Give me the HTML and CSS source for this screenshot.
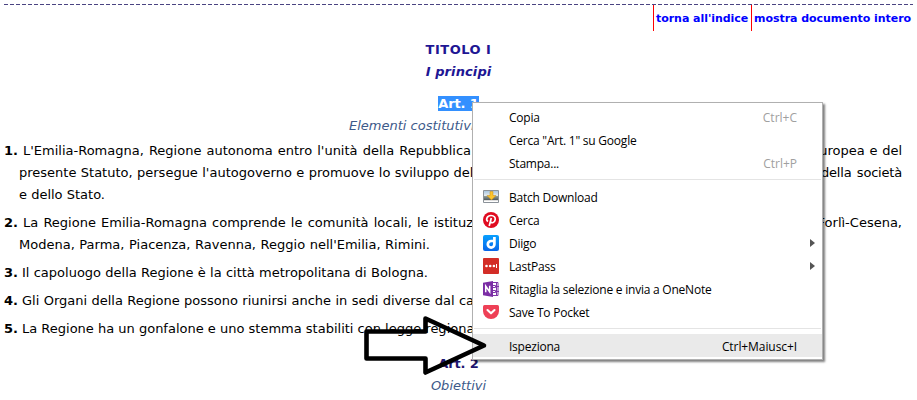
FILE: index.html
```html
<!DOCTYPE html>
<html lang="it">
<head>
<meta charset="utf-8">
<title>Statuto della Regione Emilia-Romagna</title>
<link rel="stylesheet" href="styles.css">
</head>
<body>
<svg class="rule" width="909" height="1"><path d="M0 .5H909" stroke="#4a4482" stroke-dasharray="4 2"/></svg>
<nav class="tools"><a class="t1"><span>torna all'indice</span></a><a class="t2"><span>mostra documento intero</span></a></nav>
<main>
<h1 class="title wide">TITOLO I</h1>
<h2 class="title sub">I principi</h2>
<h3 class="title art"><mark>Art. 1</mark></h3>
<p class="caption first">Elementi costitutivi</p>
<div class="par">
<div class="line"><b>1.</b><span class="seg w448">L'Emilia-Romagna, Regione autonoma entro l'unità della Repubblica</span><span class="seg end w91">Europea e del</span></div>
<div class="line in"><span class="seg w466">presente Statuto, persegue l'autogoverno e promuove lo sviluppo della</span><span class="seg end tight w81">della società</span></div>
<div class="line in"><span class="seg w86">e dello Stato.</span></div>
</div>
<div class="par">
<div class="line"><b>2.</b><span class="seg w450">La Regione Emilia-Romagna comprende le comunità locali, le istituz</span><span class="seg end">Forlì-Cesena,</span></div>
<div class="line in"><span class="seg w411">Modena, Parma, Piacenza, Ravenna, Reggio nell'Emilia, Rimini.</span></div>
</div>
<div class="par"><div class="line"><b>3.</b><span class="seg near w406">Il capoluogo della Regione è la città metropolitana di Bologna.</span></div></div>
<div class="par"><div class="line"><b>4.</b><span class="seg near w452">Gli Organi della Regione possono riunirsi anche in sedi diverse dal ca</span></div></div>
<div class="par"><div class="line"><b>5.</b><span class="seg near w452">La Regione ha un gonfalone e uno stemma stabiliti con legge regiona</span></div></div>
<h3 class="title art2">Art. 2</h3>
<p class="caption">Obiettivi</p>
</main>

<div class="menu">
<div class="item"><i></i><span>Copia</span><kbd>Ctrl+C</kbd></div>
<div class="item"><i></i><span>Cerca "Art. 1" su Google</span></div>
<div class="item"><i></i><span>Stampa...</span><kbd>Ctrl+P</kbd></div>
<hr>
<div class="item"><i><svg width="16" height="16"><defs><linearGradient id="sky" x2="0" y2="1"><stop stop-color="#a9c6df"/><stop offset=".55" stop-color="#e9eef0"/><stop offset=".6" stop-color="#8e9994"/><stop offset="1" stop-color="#4e585c"/></linearGradient></defs><path d="M.5 1.500h15v12H.5z" fill="#ddd" stroke="#8b9299"/><path d="M1 2h14v9H1z" fill="url(#sky)"/><path d="M1 12h14v1H1z" fill="#fff"/><path d="M7 2.500h3v4h3L8.500 11 4 6.500h3z" fill="#fcc42c" stroke="#c78b12" stroke-width=".5"/></svg></i><span>Batch Download</span></div>
<div class="item"><i><svg width="16" height="16"><circle cx="8" cy="8" r="8" fill="#e00b20"/><path d="M5 9.500C2.300 7.700 4 3.500 8 3.500c3.200 0 4.500 2 4.200 4.100-.5 3.200-3.600 4-4.700 2.100M8.300 6 6.200 14" fill="none" stroke="#fff" stroke-width="1.700"/></svg></i><span>Cerca</span></div>
<div class="item"><i><svg width="16" height="16"><defs><linearGradient id="blue" x2="0" y2="1"><stop stop-color="#08a0ff"/><stop offset="1" stop-color="#0865e8"/></linearGradient></defs><rect width="16" height="16" rx="2" fill="url(#blue)"/><path d="M11.400 2v7.300A3.300 3.300 0 1 1 8.100 6h2.300" fill="none" stroke="#fff" stroke-width="2.700"/></svg></i><span>Diigo</span><em></em></div>
<div class="item"><i><svg width="16" height="16"><rect width="16" height="16" rx="1" fill="#d32d27"/><circle cx="3.500" cy="8" r="1.300" fill="#fff"/><circle cx="7.200" cy="8" r="1.300" fill="#fff"/><circle cx="10.900" cy="8" r="1.300" fill="#fff"/><path d="M13.500 6v4" stroke="#fff"/></svg></i><span>LastPass</span><em></em></div>
<div class="item"><i><svg width="16" height="16"><path d="M9 1.500h6v13H9z" fill="#fff" stroke="#7f35a8"/><path d="M10 4.500h2.500v2H10M10 9.500h2.500v2H10M13.500 2v12M13 5.500h3M13 10.500h3" fill="none" stroke="#7f35a8"/><path d="M0 1.800 10 0v16L0 14.200z" fill="#7b2da5"/><path d="M2.700 11.200V5.200l4 5.600V4.800" fill="none" stroke="#fff" stroke-width="1.500"/></svg></i><span>Ritaglia la selezione e invia a OneNote</span></div>
<div class="item"><i><svg width="16" height="16"><path d="M1.500 1h13Q16 1 16 2.500V7a8 8 0 0 1-16 0V2.500Q0 1 1.500 1z" fill="#ee4056"/><path d="M4.500 6 8 9.300 11.500 6" fill="none" stroke="#fff" stroke-width="2.100" stroke-linecap="round" stroke-linejoin="round"/></svg></i><span>Save To Pocket</span></div>
<hr>
<div class="item active"><i></i><span>Ispeziona</span><kbd>Ctrl+Maiusc+I</kbd></div>
</div>
<svg class="arrow" width="130" height="70"><path d="M6.500 21.500H65.500V8.500L124 35.500 65.500 62.500V48.500H6.500z" fill="none" stroke="#000" stroke-width="4.600" stroke-linejoin="round"/></svg>
</body>
</html>
```
FILE: styles.css
```css
body { margin: 0; padding-top: 4px; width: 917px; height: 396px; overflow: hidden; background: #fff; color: #000; font: 13px/22px "DejaVu Sans", sans-serif; }
.rule { display: block; margin-left: 4px; }
.tools { display: flex; justify-content: flex-end; height: 26px; padding-right: 4px; font-size: 11px; font-weight: bold; line-height: 27px; letter-spacing: -.04px; color: #00f; }
.tools a { box-sizing: border-box; border-left: 1px solid #f00; padding-left: 2px; white-space: nowrap; }
.tools .t1 { width: 98px; }
.tools .t2 { width: 162px; }
h1, h2, h3, p { margin: 0; font-size: 13px; line-height: 22px; }
main { padding-top: 8px; }
.title { text-align: center; color: #1e1694; font-weight: bold; letter-spacing: -.1px; }
.wide { letter-spacing: .5px; }
.sub { font-style: italic; letter-spacing: .1px; }
.art { margin-top: 10px; }
.title mark { background: #3390ff; color: #fff; }
.caption { text-align: center; font-style: italic; color: #3d5a8a; }
.first { text-align: left; padding-left: 349px; margin-bottom: 3px; }
.par { margin-bottom: 6px; }
.line { display: flex; height: 22px; padding: 0 15px 0 4px; white-space: nowrap; }
.line b { width: 19px; flex: none; }
.line.in { padding-left: 19px; }
.seg { flex: none; text-align: justify; text-align-last: justify; white-space: nowrap; }
.near { margin-left: -1px; }
.end { margin-left: auto; }
.tight { letter-spacing: -.2px; }
.w81 { width: 81px; }
.w86 { width: 86px; }
.w91 { width: 91px; }
.w406 { width: 406px; }
.w411 { width: 411px; }
.w448 { width: 448px; }
.w450 { width: 450px; }
.w452 { width: 452px; }
.w466 { width: 466px; }
.art2 { color: #1e1670; margin-top: 13px; }
.menu { position: absolute; left: 472px; top: 102px; width: 351px; height: 258px; box-sizing: border-box; border: 1px solid #b0b0b0; background: #fff; padding: 2px 0; box-shadow: 2px 2px 2px rgba(0,0,0,.5); font: 12px/23px "Open Sans", sans-serif; }
.item { display: flex; height: 23px; align-items: center; padding-left: 10px; padding-right: 25px; }
.item i { display: flex; width: 26px; flex: none; }
.item i svg { display: block; }
.item span { white-space: nowrap; line-height: 23px; padding-top: 1px; letter-spacing: -.23px; }
.item kbd { margin-left: auto; font: inherit; color: #a0a0a0; padding-top: 1px; }
.item em { margin-left: auto; margin-right: -18px; border-left: 5px solid #555; border-top: 4px solid transparent; border-bottom: 4px solid transparent; }
.active { background: #eaeaea; }
.active kbd { color: #000; letter-spacing: -.08px; }
.menu hr { margin: 5px 1px; height: 1px; border: 0; background: #e4e4e4; }
.arrow { position: absolute; left: 360px; top: 310px; }
```
